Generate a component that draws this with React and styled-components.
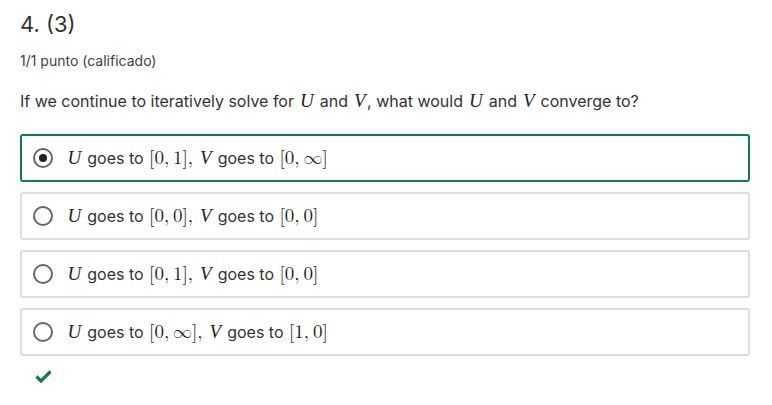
import React from 'react';
import styled, { createGlobalStyle } from 'styled-components';

const GlobalStyle = createGlobalStyle`
    body {
        margin: 0;
        background: #ffffff;
        font-family: Inter, "Open Sans", sans-serif;
        color: #333333;
    }
`;

const Page = styled.div`
    padding: 8px 23px 0 20px;
    width: 730px;
`;

const Title = styled.h3`
    margin: 0;
    font-size: 22px;
    font-weight: 400;
    line-height: 32px;
    color: #333;
`;

const Grade = styled.div`
    margin-top: 11px;
    font-size: 14px;
    line-height: 20px;
    color: #414141;
`;

const Prompt = styled.p`
    margin: 18px 0 21px;
    font-size: 16px;
    line-height: 24px;
    color: #333;
`;

const Options = styled.div`
    display: flex;
    flex-direction: column;
    gap: 10px;
`;

const Option = styled.label`
    display: flex;
    align-items: center;
    height: 48px;
    box-sizing: border-box;
    padding: 0 12px 0 11px;
    border: 2px solid ${p => (p.$selected ? '#137a50' : '#dddddd')};
    border-radius: 3px;
    font-size: 16px;
    color: #333;
`;

const Radio = styled.span`
    width: 20px;
    height: 20px;
    box-sizing: border-box;
    border: 2px solid #666;
    border-radius: 50%;
    display: flex;
    align-items: center;
    justify-content: center;
    flex-shrink: 0;
    margin-right: 13px;

    &::after {
        content: '';
        display: ${p => (p.$checked ? 'block' : 'none')};
        width: 8px;
        height: 8px;
        border-radius: 50%;
        background: #222;
    }
`;

const Math = styled.span`
    font-family: "Latin Modern Math", "Liberation Serif", "DejaVu Serif", serif;
    font-size: 19px;
    margin: 0 1px;
    color: #222;
`;

const Var = styled.i`
    font-family: "Liberation Serif", serif;
    font-style: italic;
    font-size: 19px;
    margin: 0 1.5px;
    color: #222;
`;

const Check = styled.div`
    margin: 14px 0 0 15px;
    line-height: 0;
`;

const options = [
    { u: '[0,\u20091]', v: '[0,\u2009∞]', selected: true },
    { u: '[0,\u20090]', v: '[0,\u20090]' },
    { u: '[0,\u20091]', v: '[0,\u20090]' },
    { u: '[0,\u2009∞]', v: '[1,\u20090]' },
];

export default function App() {
    return (
        <>
            <GlobalStyle />
            <Page>
                <Title>4. (3)</Title>
                <Grade>1/1 punto (calificado)</Grade>
                <Prompt>
                    If we continue to iteratively solve for <Var>U</Var> and <Var>V</Var>, what would{' '}
                    <Var>U</Var> and <Var>V</Var> converge to?
                </Prompt>
                <Options>
                    {options.map((o, i) => (
                        <Option key={i} $selected={o.selected}>
                            <Radio $checked={o.selected} />
                            <span>
                                <Var>U</Var> goes to <Math>{o.u},</Math> <Var>V</Var> goes to{' '}
                                <Math>{o.v}</Math>
                            </span>
                        </Option>
                    ))}
                </Options>
                <Check>
                    <svg width="17" height="13" viewBox="0 0 17 13">
                        <path d="M1.5 6.5 L6 11 L15.5 1.5" fill="none" stroke="#137a50" strokeWidth="3.2" />
                    </svg>
                </Check>
            </Page>
        </>
    );
}
